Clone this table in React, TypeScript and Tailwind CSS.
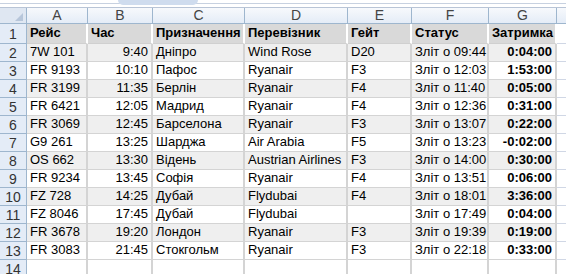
import React from "react";

type Row = string[];

const widths = ["w-[61px]", "w-[65px]", "w-[92px]", "w-[103px]", "w-[64px]", "w-[77px]", "w-[68px]"];
const letters = ["A", "B", "C", "D", "E", "F", "G"];

const header: Row = ["Рейс", "Час", "Призначення", "Перевізник", "Гейт", "Статус", "Затримка"];

const rows: Row[] = [
  ["7W 101", "9:40", "Дніпро", "Wind Rose", "D20", "Зліт о 09:44", "0:04:00"],
  ["FR 9193", "10:10", "Пафос", "Ryanair", "F3", "Зліт о 12:03", "1:53:00"],
  ["FR 3199", "11:35", "Берлін", "Ryanair", "F4", "Зліт о 11:40", "0:05:00"],
  ["FR 6421", "12:05", "Мадрид", "Ryanair", "F4", "Зліт о 12:36", "0:31:00"],
  ["FR 3069", "12:45", "Барселона", "Ryanair", "F3", "Зліт о 13:07", "0:22:00"],
  ["G9 261", "13:25", "Шарджа", "Air Arabia", "F5", "Зліт о 13:23", "-0:02:00"],
  ["OS 662", "13:30", "Відень", "Austrian Airlines", "F3", "Зліт о 14:00", "0:30:00"],
  ["FR 9234", "13:45", "Софія", "Ryanair", "F4", "Зліт о 13:51", "0:06:00"],
  ["FZ 728", "14:25", "Дубай", "Flydubai", "F4", "Зліт о 18:01", "3:36:00"],
  ["FZ 8046", "17:45", "Дубай", "Flydubai", "", "Зліт о 17:49", "0:04:00"],
  ["FR 3678", "19:20", "Лондон", "Ryanair", "F3", "Зліт о 19:39", "0:19:00"],
  ["FR 3083", "21:45", "Стокгольм", "Ryanair", "F3", "Зліт о 22:18", "0:33:00"],
];

const align = (i: number) =>
  i === 1 || i === 6 ? "justify-end pr-[3px]" : "justify-start pl-[3px]";

const RowHead = ({ n, h }: { n: number; h: string }) => (
  <div
    className={`w-[27px] ${h} shrink-0 flex items-center justify-center bg-[#e4ecf7] border-r border-b border-[#9eb6ce] text-[14px] text-[#333] pt-[2px]`}
  >
    {n}
  </div>
);

const App = () => {
  return (
    <div
      className="w-[566px] h-[274px] overflow-hidden bg-white text-black"
      style={{ fontFamily: '"Liberation Sans", Arial, sans-serif' }}
    >
      {/* formula bar edge */}
      <div className="relative h-[8px] bg-white border-b border-[#b8c4d6]">
        <div className="absolute left-0 right-0 top-[3px] h-px bg-[#c7d1e0]" />
        <div className="absolute left-[118px] top-0 w-[80px] h-[5px] rounded-b-[6px] bg-[#cfdcee]" />
      </div>

      {/* column letters */}
      <div className="flex h-[16px]">
        <div className="relative w-[27px] shrink-0 bg-[#dfe7f2] border-r border-b border-[#9eb6ce]">
          <div className="absolute right-[3px] bottom-[2px] w-0 h-0 border-l-[8px] border-l-transparent border-b-[8px] border-b-[#b7c6da]" />
        </div>
        {letters.map((l, i) => (
          <div
            key={l}
            className={`${widths[i]} shrink-0 flex items-center justify-center bg-gradient-to-b from-[#f7f9fc] to-[#e4ecf7] border-r border-b border-[#9eb6ce] text-[14px] text-[#444]`}
          >
            {l}
          </div>
        ))}
        <div className="flex-1 bg-gradient-to-b from-[#f7f9fc] to-[#e4ecf7] border-b border-[#9eb6ce]" />
      </div>

      {/* header row */}
      <div className="flex h-[20px]">
        <RowHead n={1} h="h-[20px]" />
        {header.map((t, i) => (
          <div
            key={t}
            className={`${widths[i]} shrink-0 flex items-end pb-[1px] bg-[#d9d9d9] border-r-2 border-b border-[#d0d0d0] border-r-white text-[13px] font-bold ${i === 6 ? "justify-end pr-[2px]" : "justify-start pl-[3px]"}`}
          >
            {t}
          </div>
        ))}
        <div className="flex-1 border-b border-[#d0d7e5]" />
      </div>

      {rows.map((r, ri) => {
        const gray = ri % 2 === 0;
        return (
          <div key={ri} className="flex h-[18px]">
            <RowHead n={ri + 2} h="h-[18px]" />
            {r.map((c, i) => (
              <div
                key={i}
                className={`${widths[i]} shrink-0 flex items-end border-r-2 border-b border-[#d4d4d4] text-[13px] whitespace-nowrap overflow-hidden ${gray ? "bg-[#efefef]" : "bg-white"} ${align(i)} ${i === 6 ? "font-bold" : ""}`}
              >
                {c}
              </div>
            ))}
            <div className="flex-1 border-b border-[#d0d7e5]" />
          </div>
        );
      })}

      <div className="flex h-[18px]">
        <RowHead n={14} h="h-[18px]" />
        {widths.map((w, i) => (
          <div key={i} className={`${w} shrink-0 border-r-2 border-b border-[#d4d4d4]`} />
        ))}
        <div className="flex-1" />
      </div>
    </div>
  );
};

export default App;
